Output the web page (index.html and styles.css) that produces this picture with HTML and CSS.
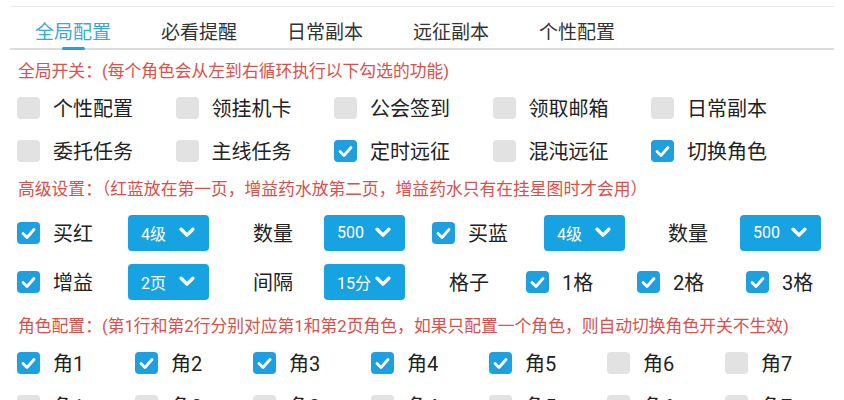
FILE: index.html
```html
<!DOCTYPE html>
<html lang="zh-CN">
<head>
    <meta charset="UTF-8">
    <meta name="viewport" content="width=device-width, initial-scale=1.0">
    <title>全局配置</title>
    <link rel="stylesheet" href="styles.css">
</head>
<body>
    <div class="tabs">
        <div class="tab active">全局配置</div>
        <div class="tab">必看提醒</div>
        <div class="tab">日常副本</div>
        <div class="tab">远征副本</div>
        <div class="tab">个性配置</div>
    </div>

    <div class="note">全局开关：(每个角色会从左到右循环执行以下勾选的功能)</div>
    <div class="row cols5">
        <label class="check"><span class="box"></span>个性配置</label>
        <label class="check"><span class="box"></span>领挂机卡</label>
        <label class="check"><span class="box"></span>公会签到</label>
        <label class="check"><span class="box"></span>领取邮箱</label>
        <label class="check"><span class="box"></span>日常副本</label>
    </div>
    <div class="row cols5">
        <label class="check"><span class="box"></span>委托任务</label>
        <label class="check"><span class="box"></span>主线任务</label>
        <label class="check"><span class="box on"><svg viewBox="0 0 23 22"><polyline points="6,11.5 10,15.5 17,7.5"/></svg></span>定时远征</label>
        <label class="check"><span class="box"></span>混沌远征</label>
        <label class="check"><span class="box on"><svg viewBox="0 0 23 22"><polyline points="6,11.5 10,15.5 17,7.5"/></svg></span>切换角色</label>
    </div>

    <div class="note second">高级设置：（红蓝放在第一页，增益药水放第二页，增益药水只有在挂星图时才会用）</div>
    <div class="row tall buy">
        <label class="check"><span class="box on"><svg viewBox="0 0 23 22"><polyline points="6,11.5 10,15.5 17,7.5"/></svg></span>买红</label>
        <div class="select"><span>4级</span><svg viewBox="0 0 15 10"><polyline points="2,2 7.5,7.5 13,2"/></svg></div>
        <span class="label">数量</span>
        <div class="select"><span>500</span><svg viewBox="0 0 15 10"><polyline points="2,2 7.5,7.5 13,2"/></svg></div>
        <label class="check"><span class="box on"><svg viewBox="0 0 23 22"><polyline points="6,11.5 10,15.5 17,7.5"/></svg></span>买蓝</label>
        <div class="select"><span>4级</span><svg viewBox="0 0 15 10"><polyline points="2,2 7.5,7.5 13,2"/></svg></div>
        <span class="label">数量</span>
        <div class="select"><span>500</span><svg viewBox="0 0 15 10"><polyline points="2,2 7.5,7.5 13,2"/></svg></div>
    </div>
    <div class="row tall boost">
        <label class="check"><span class="box on"><svg viewBox="0 0 23 22"><polyline points="6,11.5 10,15.5 17,7.5"/></svg></span>增益</label>
        <div class="select"><span>2页</span><svg viewBox="0 0 15 10"><polyline points="2,2 7.5,7.5 13,2"/></svg></div>
        <span class="label">间隔</span>
        <div class="select"><span>15分</span><svg viewBox="0 0 15 10"><polyline points="2,2 7.5,7.5 13,2"/></svg></div>
        <span class="label">格子</span>
        <label class="check"><span class="box on"><svg viewBox="0 0 23 22"><polyline points="6,11.5 10,15.5 17,7.5"/></svg></span>1格</label>
        <label class="check"><span class="box on"><svg viewBox="0 0 23 22"><polyline points="6,11.5 10,15.5 17,7.5"/></svg></span>2格</label>
        <label class="check"><span class="box on"><svg viewBox="0 0 23 22"><polyline points="6,11.5 10,15.5 17,7.5"/></svg></span>3格</label>
    </div>

    <div class="note third">角色配置：(第1行和第2行分别对应第1和第2页角色，如果只配置一个角色，则自动切换角色开关不生效)</div>
    <div class="row cols7">
        <label class="check"><span class="box on"><svg viewBox="0 0 23 22"><polyline points="6,11.5 10,15.5 17,7.5"/></svg></span>角1</label>
        <label class="check"><span class="box on"><svg viewBox="0 0 23 22"><polyline points="6,11.5 10,15.5 17,7.5"/></svg></span>角2</label>
        <label class="check"><span class="box on"><svg viewBox="0 0 23 22"><polyline points="6,11.5 10,15.5 17,7.5"/></svg></span>角3</label>
        <label class="check"><span class="box on"><svg viewBox="0 0 23 22"><polyline points="6,11.5 10,15.5 17,7.5"/></svg></span>角4</label>
        <label class="check"><span class="box on"><svg viewBox="0 0 23 22"><polyline points="6,11.5 10,15.5 17,7.5"/></svg></span>角5</label>
        <label class="check"><span class="box"></span>角6</label>
        <label class="check"><span class="box"></span>角7</label>
    </div>
    <div class="row cols7">
        <label class="check"><span class="box"></span>角1</label>
        <label class="check"><span class="box"></span>角2</label>
        <label class="check"><span class="box"></span>角3</label>
        <label class="check"><span class="box"></span>角4</label>
        <label class="check"><span class="box"></span>角5</label>
        <label class="check"><span class="box"></span>角6</label>
        <label class="check"><span class="box"></span>角7</label>
    </div>
</body>
</html>
```

FILE: styles.css
```css
html, body {
    overflow: hidden;
}
body {
    margin: 0;
    background: #fff;
    color: #222;
    font-family: Roboto, "Noto Sans CJK SC", sans-serif;
}
.tabs {
    display: flex;
    gap: 50px;
    height: 41px;
    margin: 6px 10px 0;
    padding-left: 25px;
    border-top: 1px solid #ebebeb;
    border-bottom: 2px solid #dcdcdc;
}
.tab {
    position: relative;
    display: flex;
    align-items: center;
    padding-top: 5px;
    font-size: 19px;
    color: #333;
}
.tab.active {
    color: #3aa9d8;
}
.tab.active::after {
    content: "";
    position: absolute;
    left: 27px;
    bottom: -2px;
    width: 23px;
    height: 3px;
    border-radius: 2px;
    background: #2a9fd6;
}
.note {
    height: 30px;
    line-height: 30px;
    margin-top: 6px;
    padding-left: 18px;
    font-size: 16.8px;
    color: #dc4f4b;
    white-space: nowrap;
}
.note.second {
    margin-top: 2px;
}
.note.third {
    margin-top: 5px;
}
.row {
    display: grid;
    align-items: center;
    height: 43px;
    padding-left: 17px;
    font-size: 20px;
}
.row.tall {
    height: 49px;
}
.row.buy {
    margin-top: 4px;
    grid-template-columns: 111px 125px 71px 108px 112px 124px 72px 81px;
}
.row.boost {
    grid-template-columns: 111px 125px 71px 125px 77px 111px 109px auto;
}
.cols5 {
    grid-template-columns: repeat(5, 158.5px);
}
.cols7 {
    grid-template-columns: repeat(7, 118px);
}
.check {
    display: flex;
    align-items: center;
    gap: 13px;
    white-space: nowrap;
}
.box {
    display: block;
    width: 23px;
    height: 22px;
    border-radius: 4px;
    background: #e2e2e2;
}
.box.on {
    background: #1d9fe0;
}
.box svg {
    display: block;
    width: 23px;
    height: 22px;
    fill: none;
    stroke: #fff;
    stroke-width: 2.8;
    stroke-linecap: round;
    stroke-linejoin: round;
}
.label {
    white-space: nowrap;
}
.select {
    display: flex;
    align-items: center;
    justify-content: space-between;
    box-sizing: border-box;
    width: 81px;
    height: 36px;
    padding: 0 14px 0 13px;
    border-radius: 4px;
    background: #17a2e2;
    color: #fff;
    font-size: 16px;
}
.select svg {
    width: 16px;
    height: 11px;
    fill: none;
    stroke: #fff;
    stroke-width: 3.2;
    stroke-linecap: round;
    stroke-linejoin: round;
}
```
